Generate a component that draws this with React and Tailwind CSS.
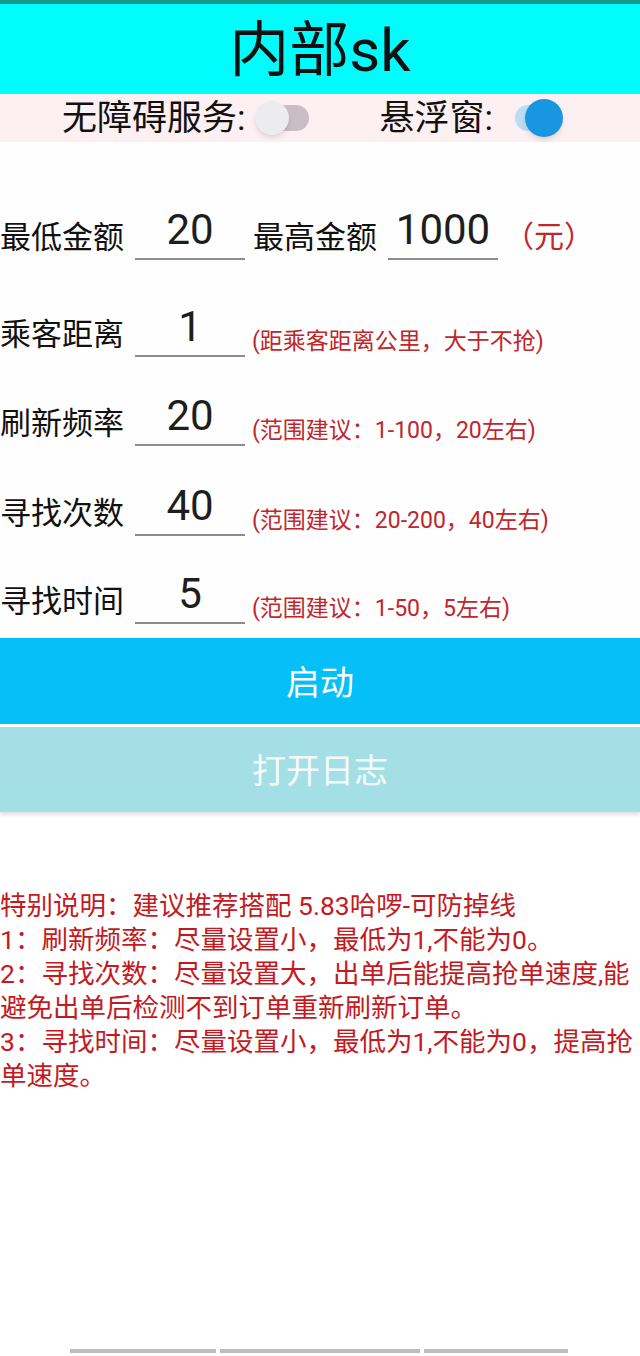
const font = { fontFamily: 'Roboto, "Noto Sans CJK SC", sans-serif' };

const notes = [
  '特别说明：建议推荐搭配 5.83哈啰-可防掉线',
  '1：刷新频率：尽量设置小，最低为1,不能为0。',
  '2：寻找次数：尽量设置大，出单后能提高抢单速度,能',
  '避免出单后检测不到订单重新刷新订单。',
  '3：寻找时间：尽量设置小，最低为1,不能为0，提高抢',
  '单速度。',
];

function Toggle({ on }) {
  return (
    <div className="relative w-[52px] h-[40px] flex items-center">
      <div
        className={
          on
            ? 'absolute left-[6px] w-[42px] h-[26px] rounded-full bg-[#bcdcf3]'
            : 'absolute left-[12px] w-[36px] h-[26px] rounded-full bg-[#c8bec3]'
        }
      />
      <div
        className={
          on
            ? 'absolute left-[16px] w-[38px] h-[38px] rounded-full bg-[#1996e0] shadow-md'
            : 'absolute left-[-6px] w-[34px] h-[34px] rounded-full bg-[#ececee] shadow-md'
        }
      />
    </div>
  );
}

function Field({ value }) {
  return (
    <div className="w-[110px] border-b-2 border-[#8c8c8c] text-center text-[42px] leading-none pb-[7px] text-[#1e1e1e]">
      {value}
    </div>
  );
}

function Row({ label, value, hint, height }) {
  return (
    <div className={`flex items-end ${height}`}>
      <span className="w-[135px] text-[31px] leading-none pb-[7px] text-[#111]">{label}</span>
      <Field value={value} />
      <span className="ml-[7px] text-[23px] leading-none pb-[4px] text-[#c0262c]">{hint}</span>
    </div>
  );
}

export default function App() {
  return (
    <div className="w-[640px] h-[1356px] bg-white flex flex-col overflow-hidden" style={font}>
      <div className="h-[4px] bg-[#179a8b]" />
      <div className="h-[90px] bg-[#00fdfd] flex items-center justify-center">
        <span className="text-[60px] leading-none text-[#111] pt-[4px]">内部sk</span>
      </div>
      <div className="h-[48px] bg-[#fdf0f3] flex items-center">
        <span className="ml-[62px] text-[35px] leading-none text-[#111]">无障碍服务:</span>
        <div className="ml-[16px]">
          <Toggle on={false} />
        </div>
        <span className="ml-[66px] text-[35px] leading-none text-[#111]">悬浮窗:</span>
        <div className="ml-[16px]">
          <Toggle on />
        </div>
      </div>

      <div className="flex flex-col bg-[#fefefe]">
        <div className="flex items-end h-[118px]">
          <span className="w-[135px] text-[31px] leading-none pb-[7px] text-[#111]">最低金额</span>
          <Field value="20" />
          <span className="ml-[8px] w-[135px] text-[31px] leading-none pb-[7px] text-[#111]">最高金额</span>
          <Field value="1000" />
          <span className="ml-[6px] text-[30px] leading-none pb-[8px] text-[#c0262c]">（元）</span>
        </div>
        <Row label="乘客距离" value="1" hint="(距乘客距离公里，大于不抢)" height="h-[97px]" />
        <Row label="刷新频率" value="20" hint="(范围建议：1-100，20左右)" height="h-[89px]" />
        <Row label="寻找次数" value="40" hint="(范围建议：20-200，40左右)" height="h-[90px]" />
        <Row label="寻找时间" value="5" hint="(范围建议：1-50，5左右)" height="h-[88px]" />
      </div>

      <div className="mt-[14px] h-[86px] bg-[#05bff8] flex items-center justify-center">
        <span className="text-[34px] text-white leading-none pt-[4px]">启动</span>
      </div>
      <div className="mt-[3px] h-[85px] bg-[#a5dfe6] flex items-center justify-center shadow-[0_3px_4px_rgba(0,0,0,0.12)]">
        <span className="text-[34px] text-[#f4fbfc] leading-none pt-[2px]">打开日志</span>
      </div>

      <div className="mt-[77px] text-[26.5px] leading-[34px] text-[#c41a1f]">
        {notes.map((line) => (
          <p key={line} className="whitespace-nowrap">
            {line}
          </p>
        ))}
      </div>

      <div className="mt-auto mb-[3px] flex gap-[4px] pl-[70px]">
        <div className="w-[146px] h-[4px] bg-[#bdbdbd]" />
        <div className="w-[200px] h-[4px] bg-[#bdbdbd]" />
        <div className="w-[144px] h-[4px] bg-[#bdbdbd]" />
      </div>
    </div>
  );
}
